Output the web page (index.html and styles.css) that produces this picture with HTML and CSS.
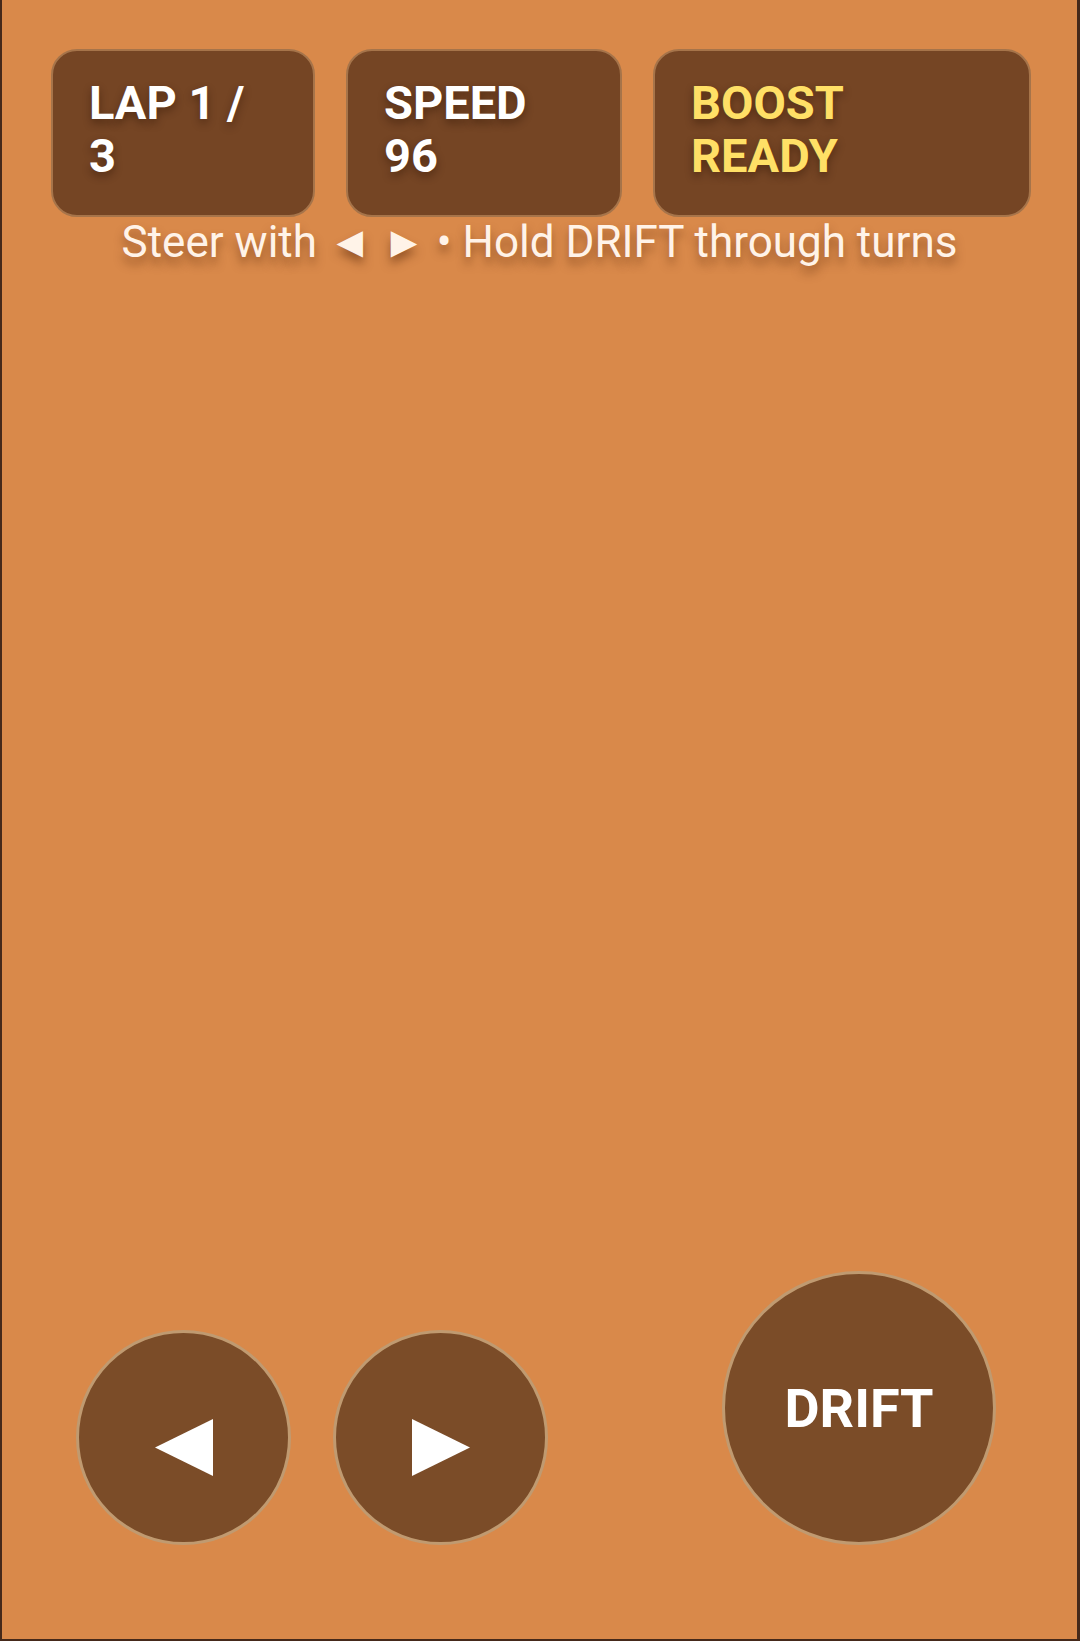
FILE: index.html
```html
<!DOCTYPE html>
<html lang="en">
<head>
<meta charset="utf-8">
<title>Drift Race</title>
<link rel="stylesheet" href="styles.css">
</head>
<body>
<main class="screen">
  <header class="hud">
    <div class="card card-lap">LAP 1 / 3</div>
    <div class="card card-speed">SPEED 96</div>
    <div class="card card-boost">BOOST READY</div>
  </header>
  <p class="hint">Steer with ◄ ► • Hold DRIFT through turns</p>
  <div class="spacer"></div>
  <footer class="controls">
    <div class="steer">
      <button class="pad" aria-label="Steer left">
        <svg class="tri" width="58" height="57" viewBox="0 0 58 57"><polygon points="0,28.5 58,0 58,57" fill="#ffffff"/></svg>
      </button>
      <button class="pad" aria-label="Steer right">
        <svg class="tri" width="58" height="57" viewBox="0 0 58 57"><polygon points="0,0 58,28.5 0,57" fill="#ffffff"/></svg>
      </button>
    </div>
    <button class="drift">DRIFT</button>
  </footer>
</main>
</body>
</html>
```

FILE: styles.css
```css
* { box-sizing: border-box; }
html, body {
  margin: 0;
  padding: 0;
  height: 100%;
}
body {
  background: #d9894a;
  font-family: Roboto, "Liberation Sans", sans-serif;
}
.screen {
  height: 1641px;
  display: flex;
  flex-direction: column;
  background: #d9894a;
  border-left: 2px solid #45291a;
  border-right: 3px solid #45291a;
  border-bottom: 2px solid #45291a;
}
.hud {
  display: grid;
  grid-template-columns: 264px 276px 378px;
  column-gap: 31px;
  padding: 49px 0 0 49px;
}
.card {
  background: #754524;
  border: 2px solid #a6744a;
  border-radius: 26px;
  padding: 25px 36px 33px;
  color: #ffffff;
  font-weight: 700;
  font-size: 47px;
  line-height: 53px;
  text-shadow: 0 4px 8px rgba(40, 15, 0, 0.45);
}
.card-boost { color: #ffe066; }
.hint {
  margin: 0;
  text-align: center;
  color: #fff3e8;
  font-size: 44px;
  font-weight: 400;
  line-height: 50px;
  text-shadow: 0 7px 10px rgba(90, 40, 10, 0.5);
}
.spacer { flex: 1; }
.controls {
  display: flex;
  justify-content: space-between;
  align-items: flex-end;
  padding: 0 81px 94px 74px;
}
.steer {
  display: flex;
  gap: 42px;
}
.pad, .drift {
  display: flex;
  align-items: center;
  justify-content: center;
  border-radius: 50%;
  background: #7b4c28;
  border: 3px solid #c09a70;
  padding: 0;
  margin: 0;
  color: #ffffff;
  font-family: Roboto, "Liberation Sans", sans-serif;
}
.pad {
  width: 215px;
  height: 215px;
}
.tri {
  display: block;
  margin-top: 20px;
}
.drift {
  width: 274px;
  height: 274px;
  font-size: 54px;
  font-weight: 700;
  letter-spacing: 0;
}
```
